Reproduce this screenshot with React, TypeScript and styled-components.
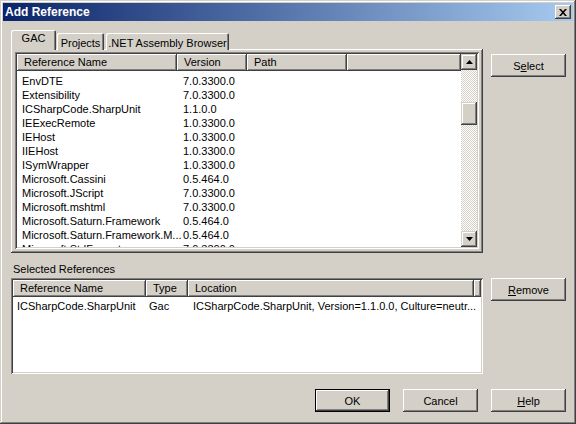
import React from "react";
import styled, { createGlobalStyle } from "styled-components";

const FACE = "#D4D0C8";
const SHADOW = "#808080";
const DARK = "#404040";
const LIGHT = "#FFFFFF";

const Global = createGlobalStyle`
  html, body { margin: 0; padding: 0; background: ${FACE}; }
  body { font-family: "Liberation Sans", Arial, sans-serif; font-size: 11px; color: #000; }
  * { box-sizing: border-box; }
`;

const Window = styled.div`
  width: 576px;
  height: 424px;
  padding: 3px;
  background: ${FACE};
  display: flex;
  flex-direction: column;
  box-shadow: inset -1px -1px ${DARK}, inset 1px 1px ${FACE},
    inset -2px -2px ${SHADOW}, inset 2px 2px ${LIGHT};
`;

const TitleBar = styled.div`
  height: 18px;
  flex: none;
  display: flex;
  align-items: center;
  justify-content: space-between;
  padding: 0 2px 0 2px;
  background: linear-gradient(to right, #0a246a, #a6caf0);
`;

const Title = styled.span`
  color: #fff;
  font-family: "Liberation Sans", Arial, sans-serif;
  font-weight: bold;
  font-size: 12px;
  line-height: 18px;
`;

const CloseButton = styled.div`
  width: 16px;
  height: 14px;
  background: ${FACE};
  display: flex;
  align-items: center;
  justify-content: center;
  box-shadow: inset -1px -1px ${DARK}, inset 1px 1px ${LIGHT},
    inset -2px -2px ${SHADOW};
`;

const Body = styled.div`
  flex: 1;
  min-height: 0;
  display: grid;
  grid-template-columns: 472px 75px;
  grid-template-rows: 223px 25px 96px 1fr;
  column-gap: 8px;
  padding: 9px 0 0 8px;
`;

const TabControl = styled.div`
  display: flex;
  flex-direction: column;
  min-height: 0;
`;

const TabStrip = styled.div`
  height: 20px;
  flex: none;
  display: flex;
  align-items: flex-end;
  position: relative;
  z-index: 1;
  margin-bottom: -1px;
`;

const Tab = styled.div<{ $active?: boolean; $width: number; $gap: number }>`
  width: ${(p) => p.$width}px;
  margin-left: ${(p) => p.$gap}px;
  height: ${(p) => (p.$active ? 20 : 17)}px;
  padding-top: ${(p) => (p.$active ? 1 : 3)}px;
  line-height: 14px;
  text-align: center;
  white-space: nowrap;
  background: ${FACE};
  border-radius: 2px 2px 0 0;
  box-shadow: inset 1px 1px ${LIGHT}, inset -1px 0 ${DARK},
    inset -2px 0 ${SHADOW};
`;

const TabPanel = styled.div`
  flex: 1;
  min-height: 0;
  padding: 3px 4px 4px 4px;
  display: flex;
  box-shadow: inset -1px -1px ${DARK}, inset 1px 1px ${LIGHT},
    inset -2px -2px ${SHADOW};
`;

const ListView = styled.div<{ $scroll?: boolean }>`
  flex: 1;
  padding: 2px;
  display: grid;
  grid-template-columns: ${(p) => (p.$scroll ? "minmax(0, 1fr) 16px" : "minmax(0, 1fr)")};
  grid-template-rows: minmax(0, 1fr);
  background: #fff;
  min-width: 0;
  min-height: 0;
  box-shadow: inset 1px 1px ${SHADOW}, inset -1px -1px ${LIGHT},
    inset 2px 2px ${DARK}, inset -2px -2px ${FACE};
`;

const ListContent = styled.div`
  display: flex;
  flex-direction: column;
  overflow: hidden;
  min-width: 0;
  min-height: 0;
`;

const Header = styled.div`
  height: 17px;
  flex: none;
  display: flex;
  background: ${FACE};
`;

const HeaderCell = styled.div<{ $width?: number }>`
  ${(p) => (p.$width ? `width: ${p.$width}px; flex: none;` : "flex: 1;")}
  height: 17px;
  padding: 1px 0 0 7px;
  line-height: 14px;
  white-space: nowrap;
  overflow: hidden;
  box-shadow: inset -1px -1px ${DARK}, inset 1px 1px ${LIGHT},
    inset -2px -2px ${SHADOW};
`;

const Rows = styled.div<{ $pad: number }>`
  flex: 1;
  min-height: 0;
  overflow: hidden;
  padding-top: ${(p) => p.$pad}px;
  background: #fff;
`;

const Row = styled.div`
  height: 14px;
  display: flex;
  line-height: 14px;
`;

const Cell = styled.div<{ $width: number; $indent: number }>`
  width: ${(p) => p.$width}px;
  flex: none;
  padding-left: ${(p) => p.$indent}px;
  white-space: nowrap;
`;

const ScrollBar = styled.div`
  display: flex;
  flex-direction: column;
  width: 16px;
  min-height: 0;
`;

const ScrollButton = styled.div`
  width: 16px;
  height: 16px;
  flex: none;
  background: ${FACE};
  display: flex;
  align-items: center;
  justify-content: center;
  box-shadow: inset -1px -1px ${DARK}, inset 1px 1px ${FACE},
    inset -2px -2px ${SHADOW}, inset 2px 2px ${LIGHT};
`;

const Track = styled.div`
  flex: 1;
  min-height: 0;
  background-color: ${FACE};
  background-image: conic-gradient(
    ${FACE} 90deg,
    #fff 90deg 180deg,
    ${FACE} 180deg 270deg,
    #fff 270deg
  );
  background-size: 2px 2px;
`;

const Thumb = styled.div`
  width: 16px;
  height: 23px;
  margin-top: 32px;
  background: ${FACE};
  box-shadow: inset -1px -1px ${DARK}, inset 1px 1px ${FACE},
    inset -2px -2px ${SHADOW}, inset 2px 2px ${LIGHT};
`;

const Button = styled.button<{ $default?: boolean; $offset?: number }>`
  width: 75px;
  height: 23px;
  margin-top: ${(p) => p.$offset ?? 0}px;
  align-self: start;
  border: none;
  padding: 0;
  font: inherit;
  font-size: 11px;
  color: #000;
  background: ${FACE};
  box-shadow: ${(p) =>
    p.$default
      ? `inset 0 0 0 1px #000, inset -2px -2px ${DARK}, inset 2px 2px ${LIGHT}, inset -3px -3px ${SHADOW}`
      : `inset -1px -1px ${DARK}, inset 1px 1px ${LIGHT}, inset -2px -2px ${SHADOW}`};
`;

const Key = styled.span`
  text-decoration: underline;
`;

const Label = styled.div`
  margin-top: 9px;
  padding-left: 2px;
  line-height: 14px;
  height: 14px;
`;

const ButtonRow = styled.div`
  grid-column: 1 / -1;
  display: flex;
  justify-content: flex-end;
  gap: 13px;
  padding-top: 15px;
  align-self: start;
`;

const Arrow = ({ down }: { down?: boolean }) => (
  <svg width="7" height="4" viewBox="0 0 7 4">
    <path d={down ? "M0 0H7L3.5 4Z" : "M3.5 0L7 4H0Z"} fill="#000" />
  </svg>
);

const CloseGlyph = () => (
  <svg width="8" height="7" viewBox="0 0 8 7">
    <path d="M0 0h2l2 2.2L6 0h2L5 3.5 8 7H6L4 4.8 2 7H0l3-3.5z" fill="#000" />
  </svg>
);

const gac: [string, string][] = [
  ["EnvDTE", "7.0.3300.0"],
  ["Extensibility", "7.0.3300.0"],
  ["ICSharpCode.SharpUnit", "1.1.0.0"],
  ["IEExecRemote", "1.0.3300.0"],
  ["IEHost", "1.0.3300.0"],
  ["IIEHost", "1.0.3300.0"],
  ["ISymWrapper", "1.0.3300.0"],
  ["Microsoft.Cassini", "0.5.464.0"],
  ["Microsoft.JScript", "7.0.3300.0"],
  ["Microsoft.mshtml", "7.0.3300.0"],
  ["Microsoft.Saturn.Framework", "0.5.464.0"],
  ["Microsoft.Saturn.Framework.M...", "0.5.464.0"],
  ["Microsoft.StdFormat", "7.0.3300.0"],
];

export default function App() {
  return (
    <>
      <Global />
      <Window>
        <TitleBar>
          <Title>Add Reference</Title>
          <CloseButton>
            <CloseGlyph />
          </CloseButton>
        </TitleBar>
        <Body>
          <TabControl>
            <TabStrip>
              <Tab $active $width={45} $gap={0}>
                GAC
              </Tab>
              <Tab $width={47} $gap={1}>
                Projects
              </Tab>
              <Tab $width={123} $gap={2}>
                .NET Assembly Browser
              </Tab>
            </TabStrip>
            <TabPanel>
              <ListView $scroll>
                <ListContent>
                  <Header>
                    <HeaderCell $width={160}>Reference Name</HeaderCell>
                    <HeaderCell $width={70}>Version</HeaderCell>
                    <HeaderCell $width={100}>Path</HeaderCell>
                    <HeaderCell />
                  </Header>
                  <Rows $pad={3}>
                    {gac.map(([name, ver]) => (
                      <Row key={name}>
                        <Cell $width={160} $indent={5}>
                          {name}
                        </Cell>
                        <Cell $width={70} $indent={6}>
                          {ver}
                        </Cell>
                      </Row>
                    ))}
                  </Rows>
                </ListContent>
                <ScrollBar>
                  <ScrollButton>
                    <Arrow />
                  </ScrollButton>
                  <Track>
                    <Thumb />
                  </Track>
                  <ScrollButton>
                    <Arrow down />
                  </ScrollButton>
                </ScrollBar>
              </ListView>
            </TabPanel>
          </TabControl>
          <Button $offset={24}>
            S<Key>e</Key>lect
          </Button>

          <Label>Selected References</Label>
          <div />

          <ListView>
            <ListContent>
              <Header>
                <HeaderCell $width={133}>Reference Name</HeaderCell>
                <HeaderCell $width={42}>Type</HeaderCell>
                <HeaderCell $width={286}>Location</HeaderCell>
                <HeaderCell />
              </Header>
              <Rows $pad={2}>
                <Row>
                  <Cell $width={133} $indent={4}>
                    ICSharpCode.SharpUnit
                  </Cell>
                  <Cell $width={42} $indent={3}>
                    Gac
                  </Cell>
                  <Cell $width={286} $indent={5}>
                    ICSharpCode.SharpUnit, Version=1.1.0.0, Culture=neutr...
                  </Cell>
                </Row>
              </Rows>
            </ListContent>
          </ListView>
          <Button>
            <Key>R</Key>emove
          </Button>

          <ButtonRow>
            <Button $default>OK</Button>
            <Button>Cancel</Button>
            <Button>
              <Key>H</Key>elp
            </Button>
          </ButtonRow>
        </Body>
      </Window>
    </>
  );
}
